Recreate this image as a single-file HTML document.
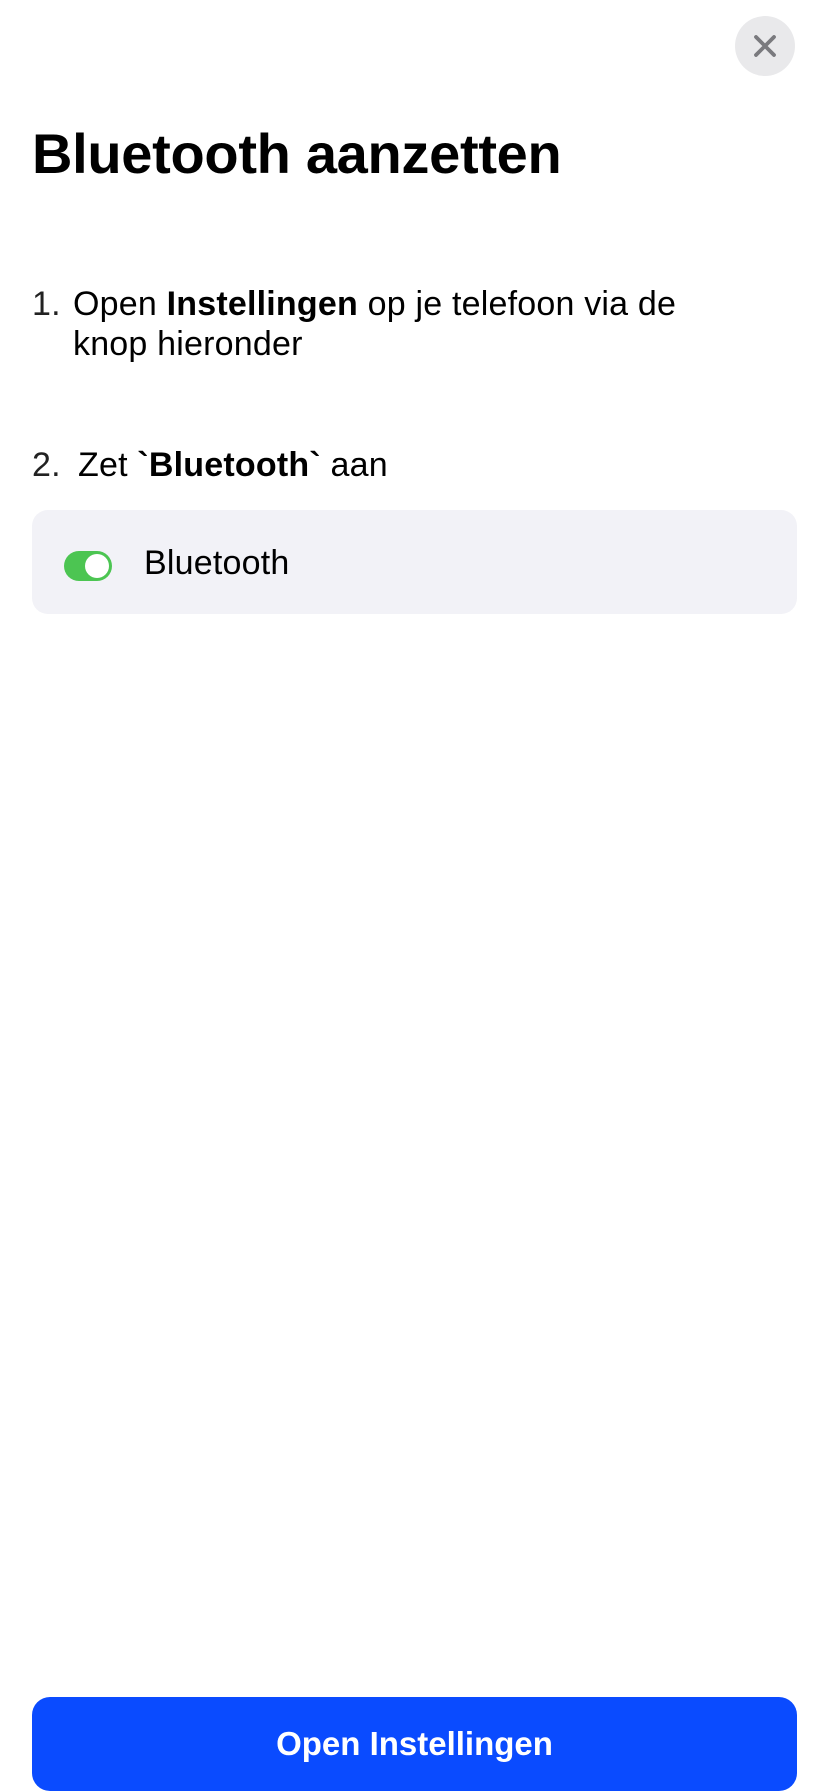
<!DOCTYPE html>
<html><head><meta charset="utf-8"><style>
html,body{margin:0;padding:0;background:#fff;}
body{width:828px;height:1792px;position:relative;overflow:hidden;font-family:"Liberation Sans",sans-serif;color:#000;}
.close{position:absolute;left:735px;top:16px;width:60px;height:60px;border-radius:50%;background:#e9e9eb;}
h1{position:absolute;left:32px;top:118px;margin:0;font-size:56px;font-weight:bold;line-height:72px;letter-spacing:-0.3px;}
.t{position:absolute;font-size:34px;line-height:40px;letter-spacing:0.2px;}
.card{position:absolute;left:32px;top:510px;width:765px;height:104px;border-radius:16px;background:#f2f2f7;}
.tog{position:absolute;left:32px;top:41px;width:48px;height:30px;border-radius:15px;background:#4cc552;}
.knob{position:absolute;right:3px;top:3px;width:24px;height:24px;border-radius:50%;background:#fff;}
.btn{position:absolute;left:32px;top:1697px;width:765px;height:94px;border-radius:18px;background:#0a4bff;color:#fff;font-weight:bold;font-size:33px;line-height:94px;text-align:center;}
</style></head><body>
<div class="close"><svg width="60" height="60" viewBox="0 0 60 60"><path d="M21 21L39 39M39 21L21 39" stroke="#7a7a7e" stroke-width="3.8" stroke-linecap="round"/></svg></div>
<h1>Bluetooth aanzetten</h1>
<div class="t" style="left:32px;top:284px;color:#222">1.</div>
<div class="t" style="left:73px;top:284px">Open <b>Instellingen</b> op je telefoon via de<br>knop hieronder</div>
<div class="t" style="left:32px;top:445px;color:#222">2.</div>
<div class="t" style="left:78px;top:445px">Zet <b>`Bluetooth`</b> aan</div>
<div class="card"><div class="tog"><div class="knob"></div></div><div class="t" style="left:112px;top:33px">Bluetooth</div></div>
<div class="btn">Open Instellingen</div>
</body></html>
